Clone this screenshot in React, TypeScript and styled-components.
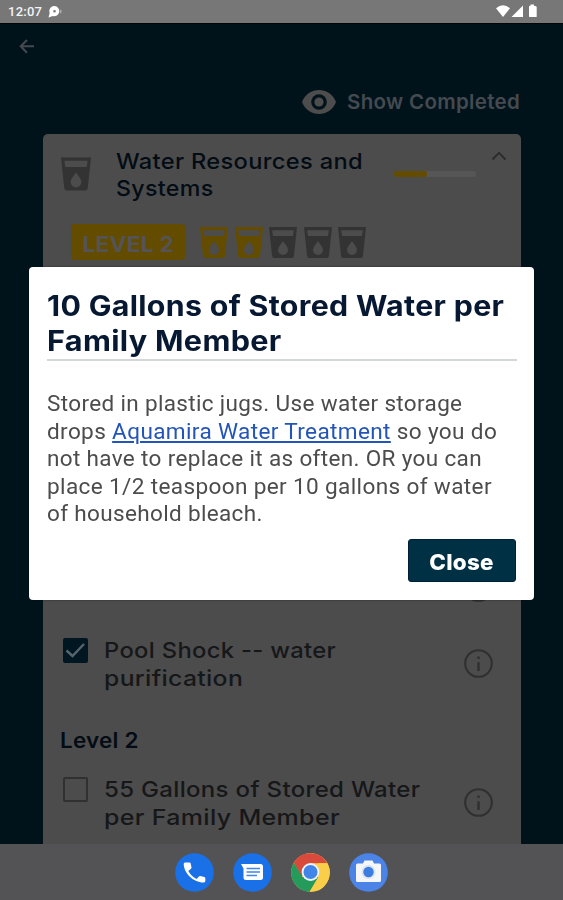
import React from "react";
import styled, { createGlobalStyle } from "styled-components";

const GlobalStyle = createGlobalStyle`
  * { box-sizing: border-box; }
  html, body { margin: 0; padding: 0; }
  body { width: 563px; height: 900px; overflow: hidden; background: #00131b; font-family: Inter, "Noto Sans", sans-serif; }
`;

const Screen = styled.div`
  display: flex;
  flex-direction: column;
  width: 563px;
  height: 900px;
  overflow: hidden;
`;

const StatusBar = styled.header`
  flex: none;
  display: flex;
  align-items: center;
  height: 24px;
  padding: 0 25px 0 8px;
  background: #777;
  border-bottom: 1px solid #050505;
  color: #f4f4f4;
`;

const Clock = styled.span`
  width: 35px;
  margin-right: 5px;
  padding-top: 1px;
  font: 500 13px/22px Roboto, sans-serif;
  letter-spacing: 0.25px;
  white-space: nowrap;
`;

const StatusIcons = styled.div`
  display: flex;
  align-items: center;
  margin: -1px 0 0 auto;
`;

const Main = styled.main`
  flex: 1;
  min-height: 0;
  overflow: hidden;
  background: #00131b;
`;

const NavRow = styled.div`
  display: flex;
  height: 45px;
  padding: 15px 0 0 19px;
`;

const ToggleRow = styled.div`
  display: flex;
  align-items: center;
  justify-content: flex-end;
  height: 65px;
  padding: 0 43px 0 0;
  gap: 11px;
`;

const Card = styled.section`
  width: 478px;
  height: 730px;
  margin-left: 43px;
  padding: 13px 18px 0 17px;
  border-radius: 5px;
  background: #4c4c4c;
`;

const CardHeader = styled.div`
  display: flex;
  align-items: flex-start;
  height: 77px;
`;

const HeaderIcon = styled.div`
  width: 56px;
  padding: 10px 0 0 1px;
`;

const HeaderText = styled.div`
  flex: none;
  width: 278px;
  padding-top: 0.5px;
`;

const Track = styled.div`
  flex: none;
  width: 82px;
  height: 6px;
  margin-top: 24px;
  border-radius: 2px;
  background: #565656;
`;

const Fill = styled.div`
  width: 33px;
  height: 6px;
  border-radius: 2px;
  background: #634c00;
`;

const Chevron = styled.div`
  margin: 4px -10px 0 15px;
  line-height: 0;
`;

const LevelRow = styled.div`
  display: flex;
  align-items: center;
  height: 36px;
  padding-left: 11px;
`;

const LevelBadge = styled.div`
  display: flex;
  align-items: center;
  justify-content: center;
  width: 114px;
  height: 36px;
  margin-right: 15px;
  padding-top: 3px;
  border-radius: 3px;
  background: #634c00;
`;

const Cups = styled.div`
  display: flex;
  gap: 6.5px;
  padding-top: 1px;
`;

const LevelOneItems = styled.div`
  display: flex;
  flex-direction: column;
  align-items: flex-end;
  justify-content: flex-end;
  height: 342px;
  padding: 0 10px 0 0;
`;

const Item = styled.div`
  display: flex;
  height: 56px;
  padding: 0 10px 0 3px;
  margin-top: ${(p: { $gap: number }) => p.$gap}px;
`;

const Checkbox = styled.span<{ $on?: boolean }>`
  flex: none;
  display: flex;
  width: 25px;
  height: 25px;
  margin: 1.5px 16px 0 0;
  border: 2px solid ${(p) => (p.$on ? "#001722" : "#303030")};
  border-radius: 2px;
  background: ${(p) => (p.$on ? "#001722" : "transparent")};
`;

const InfoSlot = styled.div`
  margin: 13px 0 0 auto;
  line-height: 0;
`;

const LevelHeading = styled.div`
  margin-top: 35px;
  height: 28px;
`;

interface LineProps {
  $size: number;
  $lh: number;
  $ls?: number;
  $color: string;
  $weight?: number;
  $stretch?: number;
  $center?: boolean;
}

const Line = styled.span<LineProps>`
  display: block;
  white-space: nowrap;
  font-size: ${(p) => p.$size}px;
  line-height: ${(p) => p.$lh}px;
  letter-spacing: ${(p) => p.$ls ?? 0}px;
  font-weight: ${(p) => p.$weight ?? 600};
  color: ${(p) => p.$color};
  transform: scaleX(${(p) => p.$stretch ?? 1});
  transform-origin: ${(p) => (p.$center ? "center" : "left")};
`;

const Dock = styled.footer`
  flex: none;
  display: flex;
  align-items: center;
  justify-content: center;
  gap: 18.7px;
  height: 56px;
  background: #535356;
`;

const DialogLayer = styled.div`
  position: fixed;
  top: 0;
  left: 0;
  width: 563px;
  height: 900px;
  padding: 267px 0 0 29px;
`;

const Dialog = styled.div`
  display: flex;
  flex-direction: column;
  width: 505px;
  height: 333px;
  padding: 22px 17px 18px 18px;
  border-radius: 4px;
  background: #fff;
  box-shadow: 0 0 2px #0008;
`;

const DialogTitle = styled.div`
  height: 72px;
  border-bottom: 2px solid #d3d7d7;
`;

const Body = styled.div`
  padding-top: 29.4px;
  font-family: Roboto, sans-serif;
`;

const Link = styled.a`
  color: #2355b8;
  text-decoration: underline;
  text-decoration-thickness: 1.5px;
  text-underline-offset: 2px;
`;

const CloseButton = styled.button`
  display: flex;
  align-items: center;
  justify-content: center;
  align-self: flex-end;
  width: 108px;
  height: 43px;
  margin: auto 1px 0 0;
  padding: 3px 0 0;
  border: 1px solid #00203a;
  border-radius: 3px;
  background: #003044;
  font-family: Inter, sans-serif;
`;

const Cup = ({ w, h, color }: { w: number; h: number; color: string }) => (
  <svg width={w} height={h} viewBox="0 0 28 31">
    <path
      fill={color}
      fillRule="evenodd"
      d="M0 0H28L25 28.5Q24.7 31 22.5 31H5.5Q3.3 31 3 28.5ZM3.2 3.2L4 9H24L24.8 3.2ZM14 14C12 17.3 9 20 9 23A5 5 0 0 0 19 23C19 20 16 17.3 14 14Z"
    />
  </svg>
);

const Info = () => (
  <svg width="29" height="29" viewBox="0 0 29 29" fill="none" stroke="#303030">
    <circle cx="14.5" cy="14.5" r="13.3" strokeWidth="2.1" />
    <path d="M14.5 13.2V22M14.5 7.5V10" strokeWidth="2.4" />
  </svg>
);

const heading = "#030c14";
const item = "#161719";
const gold = "#634c00";
const grey = "#333";

const bodyText = { $size: 22.5, $lh: 27.4, $ls: 0.35, $color: "#4c4c4c", $weight: 400 };

export default function App() {
  return (
    <Screen>
      <GlobalStyle />
      <StatusBar>
        <Clock>12:07</Clock>
        <svg width="14" height="12" viewBox="0 0 14 12">
          <path fill="#fff" fillRule="evenodd" d="M6.5 0A5.1 5.1 0 1 1 4.8 10L.5 11.5 1.7 7A5 5 0 0 1 6.5 0ZM6.5 4A1.3 1.3 0 1 0 6.5 6.6 1.3 1.3 0 0 0 6.5 4Z" />
          <path fill="#aaa" d="M12 3.5l1.5.5v3l-1.5.5z" />
        </svg>
        <StatusIcons>
          <svg width="42" height="14" viewBox="0 0 42 14" fill="#fff">
            <path d="M0 4.3Q7 -1.8 14 4.3L7 13Z" />
            <path d="M15.5 13L27 1.5V13Z" />
            <path d="M33 2.5Q33 2 34.5 1.8V.5H38V1.8Q40.7 2 40.7 3V12.5Q40.7 13 40 13H34Q33 13 33 12.5Z" />
          </svg>
        </StatusIcons>
      </StatusBar>
      <Main>
        <NavRow>
          <svg width="16" height="15" viewBox="0 0 16 15" fill="none" stroke="#44494f" strokeWidth="2">
            <path d="M15 7.3H2M8 1L1.7 7.3 8 13.8" />
          </svg>
        </NavRow>
        <ToggleRow>
          <svg width="34" height="24" viewBox="0 0 34 24">
            <path fill="#4d4d4d" d="M0 12C6-4 28-4 34 12C28 28 6 28 0 12Z" />
            <circle cx="17" cy="12" r="7.8" fill="#00131b" />
            <circle cx="17" cy="12" r="4.6" fill="#4d4d4d" />
          </svg>
          <Line $size={20.5} $lh={28} $ls={0.3} $color="#454a50">Show Completed</Line>
        </ToggleRow>
        <Card>
          <CardHeader>
            <HeaderIcon><Cup w={30} h={34} color={grey} /></HeaderIcon>
            <HeaderText>
              <Line $size={22} $lh={27.5} $ls={0.3} $color={heading} $weight={550} $stretch={1.075}>Water Resources and</Line>
              <Line $size={22} $lh={27.5} $ls={0.3} $color={heading} $weight={550} $stretch={1.055}>Systems</Line>
            </HeaderText>
            <Track><Fill /></Track>
            <Chevron>
              <svg width="16" height="10" viewBox="0 0 16 10" fill="none" stroke="#2c2c2c" strokeWidth="1.9"><path d="M1.5 8.5L8 1.8 14.5 8.5" /></svg>
            </Chevron>
          </CardHeader>
          <LevelRow>
            <LevelBadge><Line $size={21.5} $lh={26} $ls={0.2} $color="#545454" $weight={650} $stretch={1.06} $center>LEVEL 2</Line></LevelBadge>
            <Cups>
              {[gold, gold, grey, grey, grey].map((c, i) => (
                <Cup key={i} w={28} h={31} color={c} />
              ))}
            </Cups>
          </LevelRow>
          <LevelOneItems><Info /></LevelOneItems>
          <Item $gap={34}>
            <Checkbox $on>
              <svg width="21" height="21" viewBox="0 0 21 21" fill="none" stroke="#56656c" strokeWidth="2.4"><path d="M1.5 10.5L7.5 16 19 4" /></svg>
            </Checkbox>
            <div>
              <Line $size={22} $lh={28} $ls={0.3} $color={item} $weight={550} $stretch={1.08}>Pool Shock -- water</Line>
              <Line $size={22} $lh={28} $ls={0.3} $color={item} $weight={550} $stretch={1.125}>purification</Line>
            </div>
            <InfoSlot><Info /></InfoSlot>
          </Item>
          <LevelHeading><Line $size={21} $lh={28} $ls={0.2} $color={heading} $stretch={1.07}>Level 2</Line></LevelHeading>
          <Item $gap={20}>
            <Checkbox />
            <div>
              <Line $size={22} $lh={28} $ls={0.3} $color={item} $weight={550} $stretch={1.091}>55 Gallons of Stored Water</Line>
              <Line $size={22} $lh={28} $ls={0.3} $color={item} $weight={550} $stretch={1.135}>per Family Member</Line>
            </div>
            <InfoSlot><Info /></InfoSlot>
          </Item>
        </Card>
      </Main>
      <Dock>
        <svg width="39" height="39" viewBox="0 0 39 39">
          <circle cx="19.5" cy="19.5" r="19.3" fill="#1a70e6" />
          <path fill="#fff" d="M10 9.5H14.5Q15.5 9.5 15.7 10.5L16.5 14.5Q16.5 15.3 16 15.8L13.3 18Q16.5 23.5 21.5 26L24 23.4Q24.6 23 25.2 23.1L29.3 23.9Q30.3 24.1 30.3 25V28Q30.3 29.5 28.5 29.5C18.5 29.5 9 20.5 8.7 11Q8.7 9.5 10 9.5Z" />
        </svg>
        <svg width="39" height="39" viewBox="0 0 39 39">
          <circle cx="19.5" cy="19.5" r="19.3" fill="#1a70e6" />
          <path fill="#fff" d="M8 11H27.5Q30 11 30 13.5V24.5Q30 27 27.5 27H13Q10.5 27 10.5 24.5V15.5Z" />
          <path stroke="#4285e8" strokeWidth="1.6" d="M13.5 15.5H27M13.5 19H27M13.5 22.5H24" />
        </svg>
        <svg width="39" height="39" viewBox="0 0 39 39">
          <circle cx="19.5" cy="19.5" r="19.3" fill="#fbce49" />
          <path fill="#d84b3c" d="M2.8 9.7A19.3 19.3 0 0 1 36.3 10.2H19.5L10.5 24Z" />
          <path fill="#249b5a" d="M2.8 9.7A19.3 19.3 0 0 0 18.7 38.8L27.5 24 11.5 24Z" />
          <path fill="#fbce49" d="M18.7 38.8L28 23 27.5 10.2H36.3A19.3 19.3 0 0 1 18.7 38.8Z" />
          <circle cx="19.5" cy="19" r="8.9" fill="#eef3f7" />
          <circle cx="19.5" cy="19" r="7" fill="#4285e8" />
        </svg>
        <svg width="39" height="39" viewBox="0 0 39 39">
          <circle cx="19.5" cy="19.5" r="19.3" fill="#4b83e6" />
          <path fill="#f5f6f8" d="M8.5 10.5H14L15.5 7.5H23.5L25 10.5H30.5Q32 10.5 32 12V27.5Q32 29 30.5 29H8.5Q7 29 7 27.5V12Q7 10.5 8.5 10.5Z" />
          <circle cx="19.5" cy="19" r="7" fill="#dce4ef" />
          <circle cx="19.5" cy="19" r="5.2" fill="#3d7de0" />
        </svg>
      </Dock>
      <DialogLayer>
        <Dialog>
          <DialogTitle>
            <Line $size={28} $lh={35} $ls={0.3} $color="#071832" $weight={700} $stretch={1.083}>10 Gallons of Stored Water per</Line>
            <Line $size={28} $lh={35} $ls={0.3} $color="#071832" $weight={700} $stretch={1.093}>Family Member</Line>
          </DialogTitle>
          <Body>
            <Line {...bodyText}>Stored in plastic jugs. Use water storage</Line>
            <Line {...bodyText} $stretch={1.004}>drops <Link>Aquamira Water Treatment</Link> so you do</Line>
            <Line {...bodyText}>not have to replace it as often. OR you can</Line>
            <Line {...bodyText} $stretch={1.004}>place 1/2 teaspoon per 10 gallons of water</Line>
            <Line {...bodyText}>of household bleach.</Line>
          </Body>
          <CloseButton><Line $size={22} $lh={28} $ls={0.2} $color="#fff" $weight={800} $stretch={1.02} $center>Close</Line></CloseButton>
        </Dialog>
      </DialogLayer>
    </Screen>
  );
}
